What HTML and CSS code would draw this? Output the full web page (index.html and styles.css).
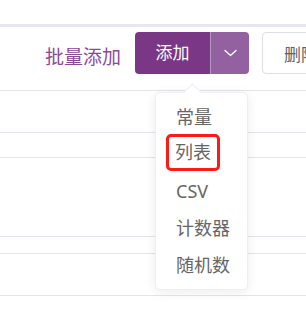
FILE: index.html
```html
<!DOCTYPE html>
<html lang="zh">
<head>
  <meta charset="UTF-8" />
  <meta name="viewport" content="width=device-width, initial-scale=1" />
  <title>添加</title>
  <link rel="stylesheet" href="styles.css">
</head>
<body>

  <div class="top-space"></div>
  <div class="band"></div>

  <div class="toolbar">
    <span class="batch-link">批量添加</span>
    <div class="split-button">
      <span class="split-main">添加</span>
      <span class="split-toggle">
        <svg width="13" height="8" viewBox="0 0 13 8" fill="none" stroke="currentColor" stroke-width="1.4" stroke-linecap="round" stroke-linejoin="round">
          <path d="M1 1.5 6.5 6.5 12 1.5"></path>
        </svg>
      </span>
    </div>
    <button class="plain-button">删除</button>
  </div>

  <div class="rows">
    <div class="row row-a"></div>
    <div class="row row-b"></div>
    <div class="row row-c"></div>
    <div class="row row-d"></div>
    <div class="row row-e"></div>
  </div>

  <div class="menu">
    <ul>
      <li>常量</li>
      <li><span class="marked">列表</span></li>
      <li>CSV</li>
      <li>计数器</li>
      <li>随机数</li>
    </ul>
  </div>

</body>
</html>
```

FILE: styles.css
```css
* {
  margin: 0;
  padding: 0;
  box-sizing: border-box;
  font-family: "Noto Sans", "Noto Sans CJK SC", sans-serif;
}
body {
  width: 306px;
  height: 314px;
  overflow: hidden;
  background: #ffffff;
  position: relative;
}
.top-space {
  height: 24px;
}
.band {
  height: 3px;
  background: #e6e7ee;
}
.toolbar {
  height: 64px;
  display: flex;
  align-items: flex-start;
  padding-top: 5px;
  padding-left: 45px;
  border-bottom: 1px solid #e4e4ec;
  white-space: nowrap;
  overflow: hidden;
}
.batch-link {
  flex-shrink: 0;
  color: #8b4a9a;
  font-size: 19px;
  line-height: 42px;
  margin-top: 4px;
  margin-right: 14px;
}
.split-button {
  flex-shrink: 0;
  display: flex;
  height: 42px;
  border-radius: 4px;
  overflow: hidden;
  color: #ffffff;
}
.split-main {
  flex-shrink: 0;
  width: 75px;
  background: #7a3786;
  font-size: 17px;
  line-height: 42px;
  text-align: center;
}
.split-toggle {
  flex-shrink: 0;
  width: 39px;
  background: #93619f;
  border-left: 1px solid rgba(255, 255, 255, 0.35);
  display: flex;
  align-items: center;
  justify-content: center;
}
.plain-button {
  flex-shrink: 0;
  margin-left: 13px;
  height: 42px;
  width: 90px;
  background: #ffffff;
  border: 1px solid #dcdfe6;
  border-radius: 4px;
  color: #606266;
  font-size: 17px;
  text-align: left;
  padding-left: 21px;
}
.row {
  border-bottom: 1px solid #e4e4ec;
}
.row-a {
  height: 42px;
}
.row-b {
  height: 25px;
}
.row-c {
  height: 79px;
}
.row-d {
  height: 17px;
}
.row-e {
  height: 42px;
}
.menu {
  position: absolute;
  left: 155px;
  top: 92px;
  width: 93px;
  height: 198px;
  background: #ffffff;
  border: 1px solid #eeeef3;
  border-radius: 5px;
  box-shadow: 0 2px 12px rgba(0, 0, 0, 0.08);
  padding-top: 6px;
}
.menu::before {
  content: "";
  position: absolute;
  top: -7px;
  left: 30px;
  width: 12px;
  height: 12px;
  background: #ffffff;
  border-top: 1px solid #eeeef3;
  border-left: 1px solid #eeeef3;
  transform: rotate(45deg);
}
.menu ul {
  list-style: none;
  position: relative;
}
.menu li {
  height: 37px;
  line-height: 37px;
  padding-left: 20px;
  color: #666666;
  font-size: 18px;
}
.marked {
  display: inline-block;
  margin-left: -10px;
  padding: 0 6px;
  height: 37px;
  line-height: 31px;
  border: 3px solid #ff1a14;
  border-radius: 5px;
  vertical-align: top;
  margin-top: -2px;
}
```
